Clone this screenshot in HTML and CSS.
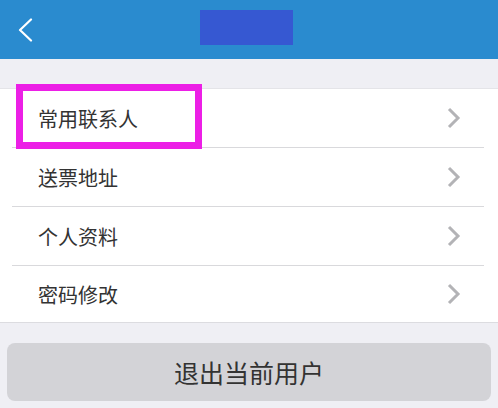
FILE: index.html
```html
<!DOCTYPE html>
<html>
<head>
    <title>账户设置</title>
    <link rel="stylesheet" href="styles.css">
</head>
<body>
    <div class="header">
        <a class="back" href="#">
            <svg width="16" height="24" viewBox="0 0 16 24">
                <polyline points="14,1.5 3,12 14,22.5" fill="none" stroke="#fff" stroke-width="2.2" stroke-linecap="round" stroke-linejoin="round"/>
            </svg>
        </a>
        <div class="title-mask"></div>
    </div>

    <ul class="menu">
        <li class="row highlight">
            <span>常用联系人</span>
            <svg class="chev" width="16" height="22" viewBox="0 0 16 22"><polyline points="3,2 12,11 3,20" fill="none" stroke="#b3b3b6" stroke-width="3"/></svg>
            <div class="mark"></div>
        </li>
        <li class="row">
            <span>送票地址</span>
            <svg class="chev" width="16" height="22" viewBox="0 0 16 22"><polyline points="3,2 12,11 3,20" fill="none" stroke="#b3b3b6" stroke-width="3"/></svg>
        </li>
        <li class="row">
            <span>个人资料</span>
            <svg class="chev" width="16" height="22" viewBox="0 0 16 22"><polyline points="3,2 12,11 3,20" fill="none" stroke="#b3b3b6" stroke-width="3"/></svg>
        </li>
        <li class="row">
            <span>密码修改</span>
            <svg class="chev" width="16" height="22" viewBox="0 0 16 22"><polyline points="3,2 12,11 3,20" fill="none" stroke="#b3b3b6" stroke-width="3"/></svg>
        </li>
    </ul>

    <div class="footer">
        <button class="logout">退出当前用户</button>
    </div>
</body>
</html>
```

FILE: styles.css
```css
body {
    margin: 0;
    padding: 0;
    background-color: #efeff4;
    font-family: "Noto Sans CJK SC", "Noto Sans", sans-serif;
    color: #333;
    width: 498px;
    height: 408px;
    overflow: hidden;
}
.header {
    height: 59px;
    background-color: #2a8bcf;
    display: flex;
    align-items: center;
    position: relative;
}
.back {
    display: flex;
    margin-left: 17px;
    margin-top: 1px;
}
.title-mask {
    position: absolute;
    left: 200px;
    top: 10px;
    width: 93px;
    height: 35px;
    background-color: #3658d2;
}
.menu {
    list-style: none;
    margin: 29px 0 0 0;
    padding: 0;
    background-color: #fff;
    border-top: 1px solid #e4e4e8;
    border-bottom: 1px solid #dcdce0;
}
.row {
    height: 58px;
    display: flex;
    align-items: center;
    justify-content: space-between;
    margin-left: 12px;
    padding-left: 26px;
    padding-right: 22px;
    margin-right: 14px;
    font-size: 20px;
    border-bottom: 1px solid #d9d9dc;
    position: relative;
}
.row:last-child {
    border-bottom: none;
    height: 56px;
}
.mark {
    position: absolute;
    left: 4px;
    top: -5px;
    width: 172px;
    height: 51px;
    border: 7px solid #ec1fe6;
}
.footer {
    padding: 20px 7px 0 7px;
}
.logout {
    width: 100%;
    height: 58px;
    border: none;
    border-radius: 8px;
    background-color: #d3d3d7;
    color: #333;
    font-family: "Noto Sans CJK SC", "Noto Sans", sans-serif;
    font-size: 25px;
    padding: 0;
}
```
